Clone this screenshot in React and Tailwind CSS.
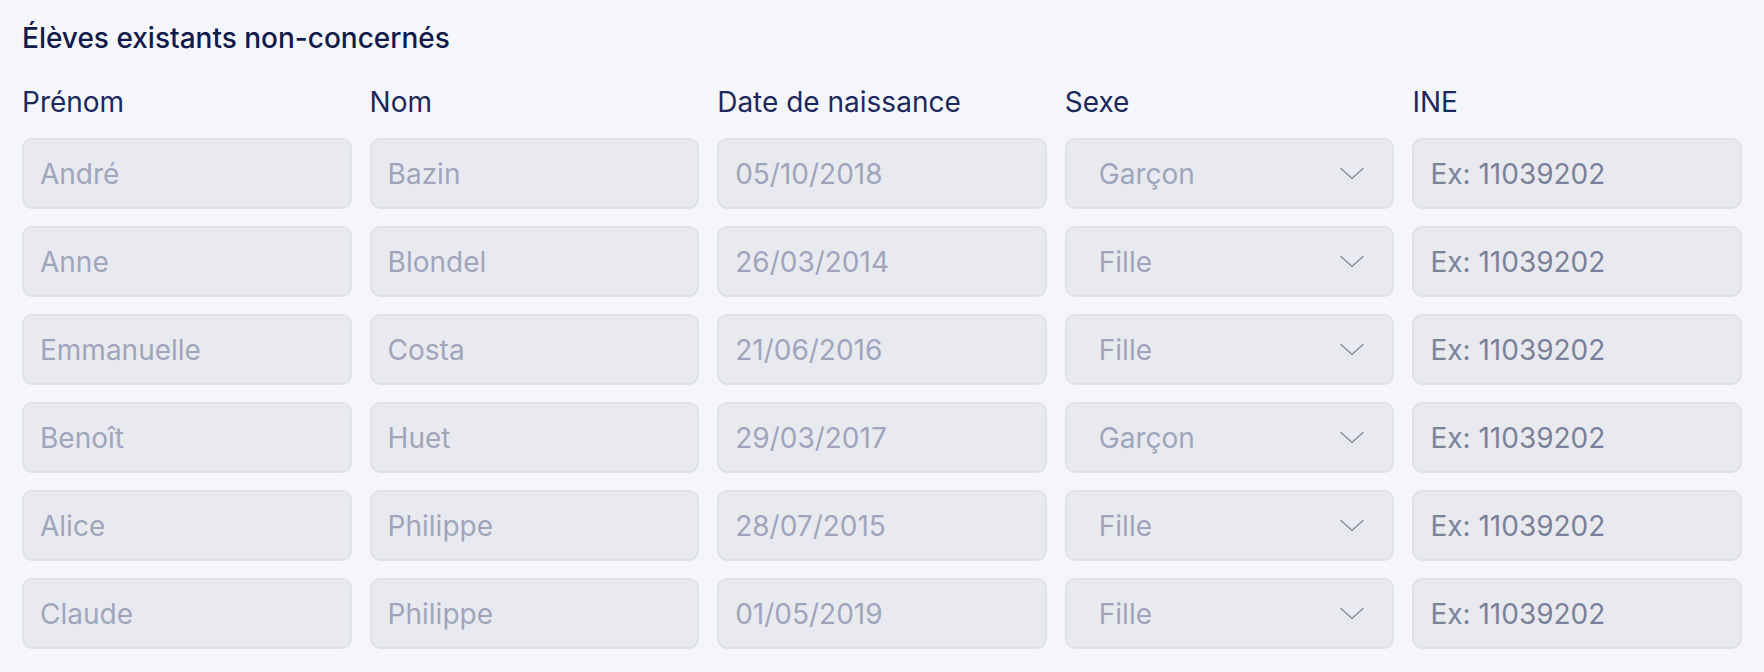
import React from "react";

const students = [
  { first: "André", last: "Bazin", birth: "05/10/2018", sex: "Garçon" },
  { first: "Anne", last: "Blondel", birth: "26/03/2014", sex: "Fille" },
  { first: "Emmanuelle", last: "Costa", birth: "21/06/2016", sex: "Fille" },
  { first: "Benoît", last: "Huet", birth: "29/03/2017", sex: "Garçon" },
  { first: "Alice", last: "Philippe", birth: "28/07/2015", sex: "Fille" },
  { first: "Claude", last: "Philippe", birth: "01/05/2019", sex: "Fille" },
];

const box =
  "h-[71px] rounded-[10px] border-2 border-[#dfe2ea] bg-[#e9eaef] flex items-center text-[28px]";

const Field = ({ value, dark }) => (
  <div className={`${box} pl-[16px] ${dark ? "text-[#7a8299]" : "text-[#9fa6bc]"}`}>
    {value}
  </div>
);

const Select = ({ value }) => (
  <div className={`${box} pl-[32px] pr-[28px] justify-between text-[#9fa6bc]`}>
    <span>{value}</span>
    <svg width="24" height="13" viewBox="0 0 24 13" fill="none">
      <path d="M1 1.5L12 11.5L23 1.5" stroke="#8a90a6" strokeWidth="1.6" strokeLinecap="round" strokeLinejoin="round" />
    </svg>
  </div>
);

export default function App() {
  const labels = ["Prénom", "Nom", "Date de naissance", "Sexe", "INE"];
  return (
    <div
      className="min-h-screen w-full bg-[#f5f6f9] px-[22px] pt-[20px]"
      style={{ fontFamily: "Inter, 'Noto Sans', sans-serif" }}
    >
      <h2 className="text-[28px] leading-[36px] font-medium text-[#111a4a]">
        Élèves existants non-concernés
      </h2>
      <div className="mt-[28px] grid grid-cols-5 gap-x-[18px]">
        {labels.map((l) => (
          <div key={l} className="text-[28px] leading-[36px] text-[#1d285c]">
            {l}
          </div>
        ))}
      </div>
      <div className="mt-[18px] flex flex-col gap-[17px]">
        {students.map((s) => (
          <div key={s.first} className="grid grid-cols-5 gap-x-[18px]">
            <Field value={s.first} />
            <Field value={s.last} />
            <Field value={s.birth} />
            <Select value={s.sex} />
            <Field value="Ex: 11039202" dark />
          </div>
        ))}
      </div>
    </div>
  );
}
